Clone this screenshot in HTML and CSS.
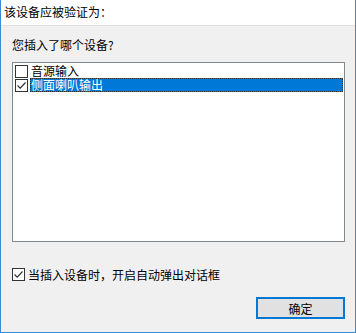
FILE: index.html
```html
<!DOCTYPE html>
<html>
<head>
    <title>设备验证</title>
    <link rel="stylesheet" href="styles.css">
</head>
<body>
    <div class="dialog">
        <div class="header">该设备应被验证为：</div>
        <div class="content">
            <div class="question">您插入了哪个设备?</div>
            <div class="listbox">
                <div class="item">
                    <span class="box"></span>
                    <span class="label">音源输入</span>
                </div>
                <div class="item selected">
                    <span class="box checked">
                        <svg width="11" height="11" viewBox="0 0 11 11"><path d="M1.5 5.5 L4.2 8.2 L9.5 2.5" fill="none" stroke="#333" stroke-width="1.2"/></svg>
                    </span>
                    <span class="label">侧面喇叭输出</span>
                </div>
            </div>
            <div class="auto">
                <span class="box checked">
                    <svg width="11" height="11" viewBox="0 0 11 11"><path d="M1.5 5.5 L4.2 8.2 L9.5 2.5" fill="none" stroke="#333" stroke-width="1.2"/></svg>
                </span>
                <span class="label">当插入设备时，开启自动弹出对话框</span>
            </div>
            <div class="buttons">
                <button class="ok">确定</button>
            </div>
        </div>
    </div>
</body>
</html>
```

FILE: styles.css
```css
body {
    margin: 0;
    font-family: "Noto Sans CJK SC", "Liberation Sans", sans-serif;
    font-size: 12px;
    color: #000;
}

.dialog {
    box-sizing: border-box;
    width: 356px;
    height: 333px;
    border: 1px solid #3b8ad6;
    border-top: none;
    background: #f0f0f0;
    display: flex;
    flex-direction: column;
}

.header {
    height: 25px;
    line-height: 24px;
    padding-left: 3px;
    background: #fff;
    border-bottom: 1px solid #dfdfdf;
}

.content {
    flex: 1;
    padding: 0 10px 0 11px;
    display: flex;
    flex-direction: column;
}

.question {
    margin-top: 10px;
    height: 26px;
    line-height: 18px;
}

.listbox {
    box-sizing: border-box;
    height: 180px;
    background: #fff;
    border: 1px solid #828790;
    padding: 1px 1px 0 1px;
}

.item {
    height: 14px;
    display: flex;
    align-items: center;
}

.item .box {
    margin-left: 1px;
}

.item .label {
    height: 14px;
    line-height: 14px;
    padding: 0 1px;
    margin-left: 2px;
}

.item.selected .label {
    flex: 1;
    background: #0078d7;
    color: #fff;
    outline: 1px dotted #333;
    outline-offset: -1px;
}

.box {
    box-sizing: border-box;
    flex: none;
    width: 13px;
    height: 13px;
    border: 1px solid #333;
    background: #fff;
    display: flex;
    align-items: center;
    justify-content: center;
}

.auto {
    margin-top: 24px;
    display: flex;
    align-items: center;
    height: 16px;
}

.auto .label {
    margin-left: 3px;
}

.buttons {
    margin-top: 15px;
    display: flex;
    justify-content: flex-end;
}

.ok {
    box-sizing: border-box;
    width: 89px;
    height: 22px;
    border: 2px solid #0078d7;
    background: #e1e1e1;
    font-family: inherit;
    font-size: 12px;
    padding: 0;
}
```
